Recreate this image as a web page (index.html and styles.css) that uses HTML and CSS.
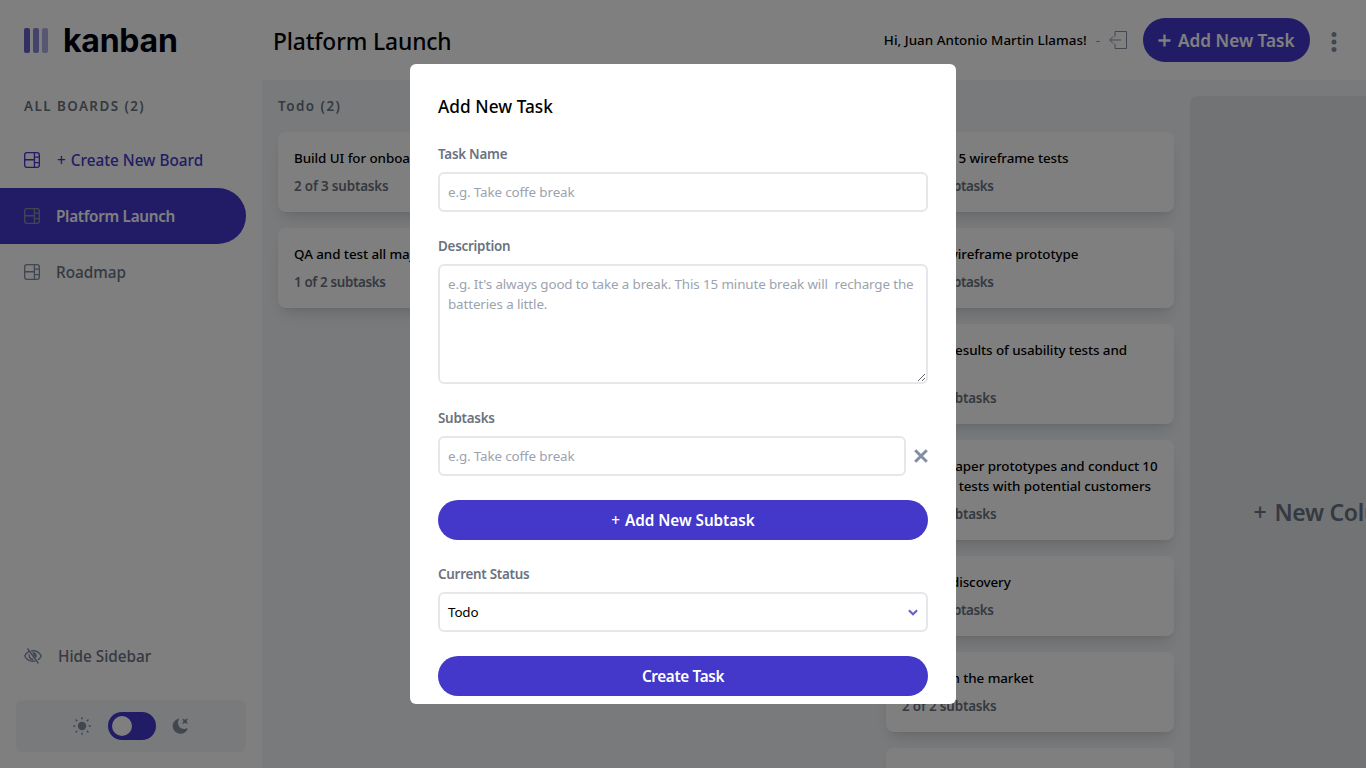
FILE: index.html
```
<!DOCTYPE html>
<html lang="en">
<head>
<meta charset="utf-8">
<title>Kanban</title>
<link rel="stylesheet" href="styles.css">
</head>
<body>
<svg class="defs" aria-hidden="true">
  <symbol id="board" viewBox="0 0 16 16">
    <g fill="none" stroke="currentColor" stroke-width="1.33">
      <rect x=".67" y=".67" width="14.66" height="14.66" rx="2.3"/>
      <path d="M10.44 .67v14.66M.67 7.78h9.77M10.44 5.1h4.9M10.44 10.7h4.9"/>
    </g>
  </symbol>
</svg>
<div class="app">
  <aside class="sidebar">
    <div class="logo">
      <svg width="24" height="25" viewBox="0 0 24 25" fill="#635fc7"><rect width="6" height="25" rx="2"/><rect x="9" width="6" height="25" rx="2" opacity=".75"/><rect x="18" width="6" height="25" rx="2" opacity=".5"/></svg>
      <span class="logo-text">kanban</span>
    </div>
    <h2 class="boards-title">ALL BOARDS (2)</h2>
    <nav class="boards">
      <a class="board create"><svg class="board-icon"><use href="#board"/></svg><span><i class="plus">+</i>Create New Board</span></a>
      <a class="board active"><svg class="board-icon"><use href="#board"/></svg><span>Platform Launch</span></a>
      <a class="board"><svg class="board-icon"><use href="#board"/></svg><span>Roadmap</span></a>
    </nav>
    <div class="hide">
      <svg width="18" height="16" viewBox="0 0 18 16" fill="none" stroke="currentColor" stroke-width="1.4"><path d="M5.2 3.4C3.2 4.4 1.7 6 .7 8c1.7 3.3 4.6 5.2 8.3 5.2.9 0 1.7-.1 2.5-.3M7.2 2.8C7.8 2.7 8.4 2.7 9 2.7c3.7 0 6.6 2 8.3 5.3-.8 1.6-2 3-3.500 3.900"/><path d="M5.300 6.200c-.8 2.500.8 5.200 3.900 5.300M3.600.500l10.800 15"/><path d="M8.200 4.300c2.700-.6 4.900 1.500 4.500 4.500l-1.200 1.100-1.700-2.400z" fill="currentColor" stroke="none"/></svg>
      <span>Hide Sidebar</span>
    </div>
    <div class="theme">
      <svg width="20" height="20" viewBox="-10 -10 20 20"><circle r="4.2" fill="currentColor"/><g stroke="currentColor" stroke-width="1.5" stroke-linecap="round"><path d="M0-7.200v-1.100M0 7.200v1.100M-7.200 0h-1.100M7.200 0h1.100M-5.200-5.200l-.8-.8M5.200-5.200l.8-.8M-5.200 5.200l-.8.800M5.200 5.200l.8.800"/></g></svg>
      <div class="toggle"><span class="knob"></span></div>
      <svg width="16" height="16" viewBox="0 0 16 16" fill="currentColor"><path d="M6.474.682c.434-.11.718.406.481.78A6.067 6.067 0 0 0 6.01 4.720c0 3.418 2.827 6.187 6.314 6.187.89.002 1.770-.182 2.584-.54.408-.18.894.165.724.570-1.160 2.775-3.944 4.730-7.194 4.730-4.292 0-7.771-3.410-7.771-7.615 0-3.541 2.466-6.518 5.807-7.370Zm8.433.070c.442-.294.969.232.674.674l-.525.787a1.943 1.943 0 0 0 0 2.157l.525.788c.295.441-.232.968-.674.673l-.787-.525a1.943 1.943 0 0 0-2.157 0l-.786.525c-.442.295-.970-.232-.675-.673l.525-.788a1.943 1.943 0 0 0 0-2.157l-.525-.787c-.295-.442.232-.968.674-.673l.787.525a1.943 1.943 0 0 0 2.157 0Z"/></svg>
    </div>
  </aside>
  <div class="content">
    <header class="header">
      <h1>Platform Launch</h1>
      <span class="greeting">Hi, Juan Antonio Martin Llamas!</span>
      <span class="dash">-</span>
      <svg class="logout" width="18" height="18" viewBox="0 0 18 18" fill="none" stroke="currentColor"><path d="M6 5.500V.500h11.500v17H6v-4.800M.700 9H12M4.200 5.500.700 9l3.500 3.500"/></svg>
      <button class="add-task"><svg width="13" height="13" viewBox="0 0 13 13" stroke="currentColor" stroke-width="2.3"><path d="M6.500 .500v12M.500 6.500h12"/></svg><span>Add New Task</span></button>
      <svg class="dots" width="6" height="20" viewBox="0 0 6 20" fill="currentColor"><circle cx="3" cy="2.500" r="2.500"/><circle cx="3" cy="10" r="2.500"/><circle cx="3" cy="17.500" r="2.500"/></svg>
    </header>
    <main class="columns">
      <section class="column">
        <h3>Todo (2)</h3>
        <article class="card"><h4>Build UI for onboarding flow</h4><p>2 of 3 subtasks</p></article>
        <article class="card"><h4>QA and test all major user journeys</h4><p class="narrow">1 of 2 subtasks</p></article>
      </section>
      <section class="column"></section>
      <section class="column">
        <h3>Done (7)</h3>
        <article class="card"><h4>Conduct 5 wireframe tests</h4><p class="narrow">1 of 1 subtasks</p></article>
        <article class="card"><h4>Create wireframe prototype</h4><p class="narrow">1 of 1 subtasks</p></article>
        <article class="card"><h4>Review results of usability tests and iterate</h4><p>3 of 3 subtasks</p></article>
        <article class="card"><h4>Create paper prototypes and conduct 10 usability tests with potential customers</h4><p>2 of 2 subtasks</p></article>
        <article class="card"><h4>Market discovery</h4><p class="narrow">1 of 1 subtasks</p></article>
        <article class="card"><h4>Research the market</h4><p>2 of 2 subtasks</p></article>
        <article class="card blank"></article>
      </section>
      <section class="new-column"><span class="new-plus">+</span><span>New Column</span></section>
    </main>
  </div>
</div>
<div class="overlay">
  <form class="modal">
    <h2>Add New Task</h2>
    <div class="field"><label>Task Name</label><input type="text" placeholder="e.g. Take coffe break"></div>
    <div class="field"><label>Description</label><textarea placeholder="e.g. It's always good to take a break. This 15 minute break will  recharge the batteries a little."></textarea></div>
    <div class="field"><label>Subtasks</label>
      <div class="subtask"><input type="text" placeholder="e.g. Take coffe break"><svg width="14" height="14" viewBox="0 0 14 14" stroke="#828fa3" stroke-width="3"><path d="M1.200 1.200l11.600 11.600M12.800 1.200 1.200 12.800"/></svg></div>
    </div>
    <button type="button" class="primary"><i class="plus">+</i>Add New Subtask</button>
    <div class="field"><label>Current Status</label>
      <div class="select"><span>Todo</span><svg width="10" height="7" viewBox="0 0 10 7" fill="none" stroke="#635fc7" stroke-width="2"><path d="M.900 1.200 5 5.300 9.100 1.200"/></svg></div>
    </div>
    <button type="button" class="primary create-btn">Create Task</button>
  </form>
</div>
</body>
</html>
```
FILE: styles.css
```
* { box-sizing: border-box; margin: 0; padding: 0; }
body {
  height: 768px;
  overflow: hidden;
  font-family: "Noto Sans", sans-serif;
  font-size: 13.4px;
  line-height: 20px;
  color: #000;
}
h1, h2, h3, h4 { font-weight: 500; }
svg { flex: none; display: block; }
.defs { position: absolute; width: 0; height: 0; }
.app { display: flex; height: 768px; overflow: hidden; }

.sidebar {
  width: 262px;
  flex: none;
  display: flex;
  flex-direction: column;
  padding: 0 16px 16px 0;
  background: #fff;
  color: #6b7280;
}
.logo { display: flex; height: 80px; padding: 28px 0 0 24px; gap: 15px; }
.logo-text {
  font: 700 32px/25px "Inter", sans-serif;
  letter-spacing: -0.25px;
  color: #000112;
}
.boards-title {
  padding: 16px 0 16px 24px;
  font-size: 13.4px;
  line-height: 20px;
  font-weight: 600;
  letter-spacing: 1.45px;
}
.boards { display: flex; flex-direction: column; }
.board {
  display: flex;
  align-items: center;
  gap: 16px;
  height: 56px;
  padding-left: 24px;
  border-radius: 0 28px 28px 0;
  font-size: 15.3px;
  font-weight: 500;
}
.board-icon { width: 16px; height: 16px; color: #828fa3; }
.plus { font-style: normal; font-weight: 500; margin-right: 5px; }
.create, .create .board-icon { color: #4338ca; }
.create { gap: 17px; }
.active { background: #4338ca; color: #fff; font-weight: 600; letter-spacing: -0.3px; }
.hide {
  display: flex;
  align-items: center;
  gap: 16px;
  margin-top: auto;
  padding: 0 0 32px 24px;
  height: 56px;
  font-size: 15.3px;
  font-weight: 500;
}
.hide svg, .theme svg { color: #828fa3; }
.theme {
  display: flex;
  align-items: center;
  justify-content: center;
  gap: 16px;
  height: 52px;
  margin-left: 16px;
  padding-right: 2px;
  border-radius: 6px;
  background: #f1f5f9;
}
.toggle { display: flex; align-items: center; width: 48px; height: 28px; padding: 4px; border-radius: 14px; background: #4338ca; }
.knob { width: 20px; height: 20px; border-radius: 50%; background: #fff; }

.content { flex: 1; min-width: 0; display: flex; flex-direction: column; }
.header { display: flex; align-items: center; height: 80px; padding: 0 29px 0 11px; color: #828fa3; background: #fff; }
.header h1 { font-size: 22.8px; line-height: 32px; letter-spacing: -0.12px; color: #000; margin: 3px auto 0 0; }
.greeting { font-weight: 500; color: #000; letter-spacing: 0.03px; }
.dash { margin: 0 9px; }
.add-task {
  display: flex;
  align-items: center;
  gap: 7px;
  width: 167px;
  height: 44px;
  margin: 0 21px 0 16px;
  padding-left: 15px;
  border: 0;
  border-radius: 22px;
  background: #4338ca;
  color: #fff;
  font: 600 17.2px/24px "Noto Sans", sans-serif;
  white-space: nowrap;
}
.add-task span { padding-top: 2px; }
.dots { margin-top: 4px; }

.columns { flex: 1; min-height: 0; display: flex; gap: 16px; padding: 16px; background: #f1f5f9; overflow: hidden; }
.column { width: 288px; flex: none; display: flex; flex-direction: column; gap: 16px; }
.column h3 { font-size: 13.4px; line-height: 20px; font-weight: 600; letter-spacing: 1.5px; color: #6b7280; }
.card {
  flex: none;
  display: flex;
  flex-direction: column;
  gap: 8px;
  padding: 16px;
  border-radius: 8px;
  background: #fff;
  box-shadow: 0 10px 15px -3px rgba(0,0,0,.1), 0 4px 6px -4px rgba(0,0,0,.1);
}
.card h4 { font-size: 13.4px; line-height: 20px; letter-spacing: -0.07px; }
.card p { font-weight: 600; letter-spacing: -0.16px; color: #6b7280; }
.card .narrow { letter-spacing: -0.36px; }
.blank { height: 80px; }
.new-column {
  display: flex;
  align-items: center;
  justify-content: center;
  gap: 8px;
  width: 288px;
  height: 832px;
  flex: none;
  border-radius: 8px;
  background: #e5e7eb;
  color: #6b7280;
  font-size: 23px;
  font-weight: 600;
  letter-spacing: -0.3px;
  white-space: nowrap;
}
.new-plus { font-weight: 500; }

.overlay { position: fixed; inset: 0; display: flex; align-items: center; justify-content: center; background: rgba(0,0,0,.5); }
.modal {
  display: flex;
  flex-direction: column;
  gap: 24px;
  width: 546px;
  height: 640px;
  padding: 28px 28px 8px;
  border-radius: 6px;
  background: #fff;
}
.modal h2 { font-size: 17.2px; line-height: 28px; height: 28px; padding-top: 1px; letter-spacing: 0.05px; }
.field { display: flex; flex-direction: column; gap: 8px; }
.field label { font-weight: 600; letter-spacing: -0.25px; color: #6b7280; }
input, textarea, .select {
  width: 100%;
  height: 40px;
  padding: 8px;
  border: 2px solid #e5e7eb;
  border-radius: 6px;
  background: #fff;
  font: 400 13.4px/20px "Noto Sans", sans-serif;
  letter-spacing: -0.12px;
}
::placeholder { color: #9ca3af; }
textarea { height: 120px; display: block; }
.subtask { display: flex; align-items: center; gap: 8px; }
.subtask input { flex: 1; min-width: 0; }
.select { display: flex; align-items: center; justify-content: space-between; }
.primary {
  height: 40px;
  flex: none;
  border: 0;
  border-radius: 20px;
  background: #4338ca;
  color: #fff;
  font: 600 15.3px/24px "Noto Sans", sans-serif;
  letter-spacing: -0.05px;
}
.create-btn { letter-spacing: -0.35px; }
```
